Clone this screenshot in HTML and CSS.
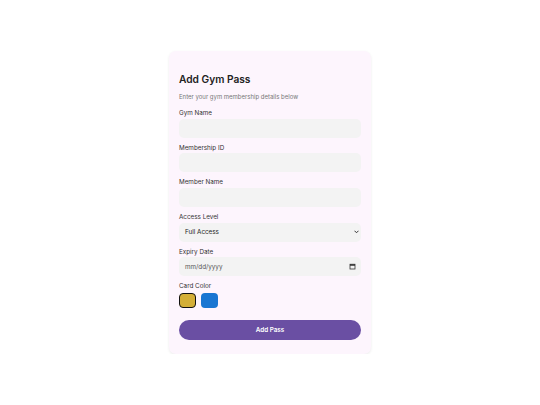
FILE: index.html
```html
<!DOCTYPE html>
<html lang="en">
<head>
    <meta charset="UTF-8">
    <meta name="viewport" content="width=device-width, initial-scale=1.0">
    <title>Add Gym Pass</title>
    <link rel="stylesheet" href="styles.css">
</head>
<body>
    <div class="card">
        <h1>Add Gym Pass</h1>
        <p class="subtitle">Enter your gym membership details below</p>

        <div class="field">
            <label>Gym Name</label>
            <input type="text">
        </div>
        <div class="field">
            <label>Membership ID</label>
            <input type="text">
        </div>
        <div class="field">
            <label>Member Name</label>
            <input type="text">
        </div>
        <div class="field">
            <label>Access Level</label>
            <div class="select">
                <span>Full Access</span>
                <svg width="5" height="4" viewBox="0 0 10 8"><path d="M1 1.5 L5 5.5 L9 1.5" fill="none" stroke="#333" stroke-width="2"/></svg>
            </div>
        </div>
        <div class="field">
            <label>Expiry Date</label>
            <div class="select date">
                <span>mm/dd/yyyy</span>
                <svg width="7" height="7" viewBox="0 0 14 14"><rect x="2" y="2.5" width="10" height="9.5" fill="none" stroke="#333" stroke-width="1.6"/><rect x="2" y="2.5" width="10" height="3" fill="#333"/></svg>
            </div>
        </div>
        <div class="field">
            <label>Card Color</label>
            <div class="swatches">
                <span class="swatch gold selected"></span>
                <span class="swatch blue"></span>
            </div>
        </div>

        <button>Add Pass</button>
    </div>
</body>
</html>
```

FILE: styles.css
```css
body {
    margin: 0;
    background: #ffffff;
    font-family: Inter, "Noto Sans", sans-serif;
    color: #222;
}
.card {
    width: 182px;
    margin: 51px auto 0;
    padding: 22px 10px 14px;
    background: #fdf5fd;
    border-radius: 7px;
    box-shadow: 0 1px 3px rgba(0, 0, 0, 0.08);
}
h1 {
    margin: 0;
    font-size: 10.2px;
    font-weight: 600;
    line-height: 13px;
    color: #222;
}
.subtitle {
    margin: 7px 0 8px;
    font-size: 6px;
    line-height: 8px;
    color: #777;
}
.field {
    margin-bottom: 6.2px;
}
.field label {
    display: block;
    font-size: 6.3px;
    line-height: 8px;
    color: #333;
    margin-bottom: 1.5px;
}
.field input {
    display: block;
    width: 100%;
    box-sizing: border-box;
    height: 19px;
    border: none;
    border-radius: 5px;
    background: #f3f3f3;
    font-size: 6.3px;
    padding: 0 6px;
}
.select {
    display: flex;
    align-items: center;
    justify-content: space-between;
    height: 19px;
    border-radius: 5px;
    background: #f3f3f3;
    padding: 0 2px 0 6px;
    font-size: 6.3px;
    color: #222;
}
.select.date {
    color: #555;
    padding-right: 5px;
}
.swatches {
    display: flex;
    gap: 5px;
    padding-top: 1px;
}
.swatch {
    width: 17px;
    height: 15px;
    box-sizing: border-box;
    border-radius: 4px;
}
.swatch.gold {
    background: #d4af37;
}
.swatch.blue {
    background: #1976d2;
}
.swatch.selected {
    border: 1.5px solid #111;
}
button {
    display: block;
    width: 100%;
    height: 20px;
    margin-top: 12px;
    border: none;
    border-radius: 10px;
    background: #6a4fa3;
    color: #fff;
    font-family: Inter, "Noto Sans", sans-serif;
    font-size: 6.3px;
    font-weight: 600;
}
```
